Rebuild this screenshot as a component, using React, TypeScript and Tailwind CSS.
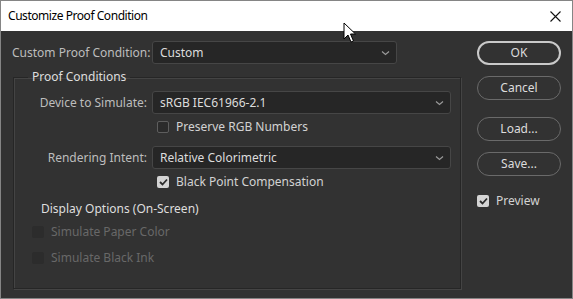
import React from 'react'

const font = { fontFamily: '"Noto Sans", "Open Sans", sans-serif' }

function Chevron() {
  return (
    <svg width="9" height="6" viewBox="0 0 9 6" className="shrink-0">
      <path d="M1 1.5 L4.5 4.5 L8 1.5" fill="none" stroke="#9a9a9a" strokeWidth="1.2" />
    </svg>
  )
}

function Select({ value, width }: { value: string; width: string }) {
  return (
    <div className={`${width} h-[23px] flex items-center justify-between pl-[7px] pr-[6px] bg-[#262626] border border-[#464646] rounded-[3px] text-[12px] text-[#dcdcdc]`}>
      <span>{value}</span>
      <Chevron />
    </div>
  )
}

function Check({ checked, disabled }: { checked?: boolean; disabled?: boolean }) {
  if (checked) {
    return (
      <div className="w-[12px] h-[12px] rounded-[2px] bg-[#d4d4d4] flex items-center justify-center shrink-0">
        <svg width="9" height="8" viewBox="0 0 9 8">
          <path d="M1 4 L3.5 6.5 L8 1.5" fill="none" stroke="#2b2b2b" strokeWidth="1.8" />
        </svg>
      </div>
    )
  }
  return (
    <div
      className={`w-[12px] h-[12px] rounded-[2px] shrink-0 border ${
        disabled ? 'bg-[#2c2c2c] border-[#2c2c2c]' : 'bg-[#2b2b2b] border-[#5e5e5e]'
      }`}
    />
  )
}

function PillButton({ label, primary }: { label: string; primary?: boolean }) {
  return (
    <div
      className={`w-[84px] h-[24px] rounded-full flex items-center justify-center text-[12px] text-[#dcdcdc] ${
        primary ? 'border-2 border-[#c9c9c9]' : 'border border-[#6a6a6a]'
      }`}
    >
      {label}
    </div>
  )
}

export default function App() {
  return (
    <div className="relative w-[573px] h-[299px] overflow-hidden bg-[#323232] border border-[#858585] flex flex-col" style={font}>
      {/* title bar */}
      <div className="h-[30px] bg-white flex items-center justify-between pl-[7px] pr-[11px] shrink-0">
        <span className="text-[12px] tracking-[-0.45px] text-black">Customize Proof Condition</span>
        <svg width="11" height="11" viewBox="0 0 11 11">
          <path d="M0.5 0.5 L10.5 10.5 M10.5 0.5 L0.5 10.5" stroke="#111" strokeWidth="1.1" />
        </svg>
      </div>

      <div className="flex pl-[11px] pt-[10px]">
        {/* left column */}
        <div className="w-[449px] flex flex-col">
          <div className="flex items-center h-[23px]">
            <span className="w-[140px] text-[12px] text-[#bdbdbd]">Custom Proof Condition:</span>
            <Select value="Custom" width="w-[245px]" />
          </div>

          <fieldset className="mt-[5px] ml-[1px] w-[448px] h-[220px] border border-[#262626] shadow-[inset_1px_1px_0_#444,1px_1px_0_#444] px-0">
            <legend className="ml-[14px] px-[4px] text-[12px] text-[#dedede] leading-[16px]">Proof Conditions</legend>
            <div className="flex flex-col pt-[6px]">
              <div className="flex items-center h-[23px]">
                <span className="w-[133px] text-right text-[12px] text-[#bdbdbd]">Device to Simulate:</span>
                <div className="ml-[5px]">
                  <Select value="sRGB IEC61966-2.1" width="w-[299px]" />
                </div>
              </div>
              <div className="flex items-center h-[14px] mt-[6px] ml-[143px] gap-[7px]">
                <Check />
                <span className="text-[12px] text-[#d2d2d2]">Preserve RGB Numbers</span>
              </div>
              <div className="flex items-center h-[23px] mt-[12px]">
                <span className="w-[133px] text-right text-[12px] text-[#bdbdbd]">Rendering Intent:</span>
                <div className="ml-[5px]">
                  <Select value="Relative Colorimetric" width="w-[299px]" />
                </div>
              </div>
              <div className="flex items-center h-[14px] mt-[6px] ml-[143px] gap-[7px]">
                <Check checked />
                <span className="text-[12px] text-[#d2d2d2]">Black Point Compensation</span>
              </div>
              <div className="h-[16px] mt-[12px] ml-[27px] text-[12px] text-[#dedede] leading-[16px]">
                Display Options (On-Screen)
              </div>
              <div className="flex items-center h-[14px] mt-[8px] ml-[18px] gap-[7px]">
                <Check disabled />
                <span className="text-[12px] text-[#686868]">Simulate Paper Color</span>
              </div>
              <div className="flex items-center h-[14px] mt-[12px] ml-[18px] gap-[7px]">
                <Check disabled />
                <span className="text-[12px] text-[#686868]">Simulate Black Ink</span>
              </div>
            </div>
          </fieldset>
        </div>

        {/* right column */}
        <div className="ml-[16px] flex flex-col">
          <PillButton label="OK" primary />
          <div className="mt-[11px]">
            <PillButton label="Cancel" />
          </div>
          <div className="mt-[17px]">
            <PillButton label="Load..." />
          </div>
          <div className="mt-[11px]">
            <PillButton label="Save..." />
          </div>
          <div className="flex items-center gap-[7px] mt-[16px]">
            <Check checked />
            <span className="text-[12px] text-[#d2d2d2]">Preview</span>
          </div>
        </div>
      </div>

      {/* mouse pointer */}
      <svg className="absolute left-[342px] top-[21px]" width="14" height="22" viewBox="0 0 14 22">
        <path d="M1 1 L1 17 L5 13 L8 20 L10.5 19 L7.5 12 L12.5 12 Z" fill="#fff" stroke="#000" strokeWidth="1" strokeLinejoin="round" />
      </svg>
    </div>
  )
}
